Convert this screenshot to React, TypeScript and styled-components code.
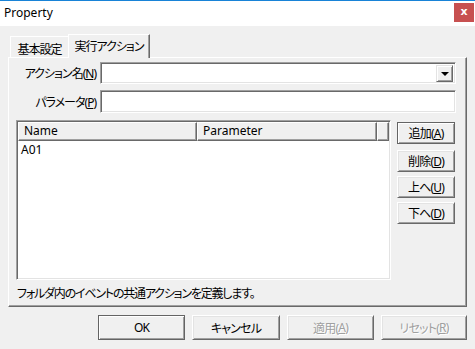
import React from "react";
import styled, { createGlobalStyle, css } from "styled-components";

const GlobalStyle = createGlobalStyle`
  html, body {
    margin: 0;
    padding: 0;
    background: #f0f0f0;
  }
  body {
    font-family: "Noto Sans", "Noto Sans CJK JP", sans-serif;
    font-size: 12px;
    font-feature-settings: "palt";
    color: #000;
  }
  * {
    box-sizing: border-box;
  }
`;

const Window = styled.div`
  width: 475px;
  height: 349px;
  background: #f0f0f0;
  display: flex;
  flex-direction: column;
  overflow: hidden;
`;

const TitleBar = styled.div`
  height: 26px;
  background: #fff;
  border-top: 1px solid #1883d7;
  display: flex;
  align-items: flex-start;
  padding-left: 4px;
`;

const TitleText = styled.div`
  font-family: "Noto Sans", sans-serif;
  font-size: 12px;
  line-height: 22px;
  margin-top: 1px;
`;

const CloseButton = styled.div`
  margin-left: auto;
  margin-top: 2px;
  margin-right: 1px;
  width: 20px;
  height: 19px;
  background: #c75050;
  color: #fff;
  display: flex;
  align-items: center;
  justify-content: center;
  font-family: "DejaVu Sans", sans-serif;
  font-size: 11px;
  font-weight: bold;
  line-height: 1;
  padding-bottom: 2px;
`;

const Body = styled.div`
  padding: 8px 8px 0 8px;
  display: flex;
  flex-direction: column;
`;

const TabStrip = styled.div`
  display: flex;
  align-items: flex-end;
  height: 23px;
  padding-left: 2px;
  position: relative;
  z-index: 1;
`;

const Tab = styled.div<{ $active?: boolean }>`
  display: flex;
  align-items: center;
  justify-content: center;
  letter-spacing: -1px;
  border-top: 1px solid #fff;
  border-left: 1px solid #fff;
  border-right: 1px solid #696969;
  box-shadow: inset -1px 0 #a0a0a0;
  background: #f0f0f0;
  ${({ $active }) =>
    $active
      ? css`
          width: 82px;
          height: 24px;
          margin-bottom: -1px;
          padding-bottom: 1px;
        `
      : css`
          width: 58px;
          height: 21px;
          border-right: none;
          box-shadow: none;
          padding-top: 3px;
        `}
`;

const Panel = styled.div`
  width: 459px;
  height: 250px;
  border-top: 1px solid #fff;
  border-left: 1px solid #fff;
  border-right: 1px solid #696969;
  border-bottom: 1px solid #696969;
  box-shadow: inset -1px -1px #a0a0a0;
  padding: 4px 10px 0 7px;
  display: flex;
  flex-direction: column;
`;

const FormRow = styled.div<{ $h: number; $mt?: number }>`
  display: flex;
  align-items: center;
  height: ${({ $h }) => $h}px;
  margin-top: ${({ $mt }) => $mt || 0}px;
`;

const Label = styled.div`
  width: 80px;
  text-align: right;
  margin-right: 4px;
  white-space: nowrap;
  letter-spacing: -1px;
`;

const Field = styled.div`
  flex: 1;
  height: 100%;
  background: #fff;
  border-top: 1px solid #a0a0a0;
  border-left: 1px solid #a0a0a0;
  border-right: 1px solid #fff;
  border-bottom: 1px solid #fff;
  box-shadow: inset 1px 1px #696969, inset -1px -1px #e3e3e3;
  display: flex;
  justify-content: flex-end;
  align-items: center;
  padding-right: 2px;
`;

const DropButton = styled.div`
  width: 17px;
  height: 17px;
  background: #f0f0f0;
  border-top: 1px solid #e3e3e3;
  border-left: 1px solid #e3e3e3;
  border-right: 1px solid #696969;
  border-bottom: 1px solid #696969;
  box-shadow: inset 1px 1px #fff, inset -1px -1px #a0a0a0;
  display: flex;
  align-items: center;
  justify-content: center;
`;

const Arrow = styled.div`
  width: 0;
  height: 0;
  border-left: 4px solid transparent;
  border-right: 4px solid transparent;
  border-top: 4px solid #000;
  margin-top: 1px;
`;

const ListArea = styled.div`
  display: flex;
  margin-top: 7px;
  gap: 6px;
`;

const ListView = styled.div`
  width: 375px;
  height: 160px;
  background: #fff;
  border-top: 1px solid #a0a0a0;
  border-left: 1px solid #a0a0a0;
  border-right: 1px solid #fff;
  border-bottom: 1px solid #fff;
  box-shadow: inset 1px 1px #696969, inset -1px -1px #e3e3e3;
  padding: 1px 1px 0 1px;
  display: flex;
  flex-direction: column;
`;

const HeaderRow = styled.div`
  display: flex;
  height: 19px;
`;

const HeaderCell = styled.div<{ $w?: number }>`
  ${({ $w }) => ($w ? `width: ${$w}px;` : "flex: 1;")}
  height: 100%;
  background: #f0f0f0;
  border-top: 1px solid #fff;
  border-left: 1px solid #fff;
  border-right: 1px solid #696969;
  border-bottom: 1px solid #696969;
  box-shadow: inset -1px -1px #a0a0a0;
  padding-left: 5px;
  line-height: 16px;
  white-space: nowrap;
  overflow: hidden;
`;

const ItemRow = styled.div`
  height: 16px;
  line-height: 16px;
  padding-left: 3px;
  margin-top: 1px;
`;

const SideButtons = styled.div`
  display: flex;
  flex-direction: column;
  padding-top: 2px;
  gap: 4px;
`;

const Button = styled.div<{
  $w: number;
  $h: number;
  $default?: boolean;
  $disabled?: boolean;
}>`
  width: ${({ $w }) => $w}px;
  height: ${({ $h }) => $h}px;
  display: flex;
  align-items: center;
  justify-content: center;
  letter-spacing: -0.8px;
  background: #f0f0f0;
  border-top: 1px solid #fff;
  border-left: 1px solid #fff;
  border-right: 1px solid #696969;
  border-bottom: 1px solid #696969;
  box-shadow: inset 1px 1px #e3e3e3, inset -1px -1px #a0a0a0;
  white-space: nowrap;
  ${({ $default }) =>
    $default &&
    css`
      border: 1px solid #646464;
      box-shadow: inset 1px 1px #fff, inset -1px -1px #a0a0a0;
    `}
  ${({ $disabled }) =>
    $disabled &&
    css`
      color: #a0a0a0;
      text-shadow: 1px 1px #fff;
    `}
`;

const StatusText = styled.div`
  margin-top: 7px;
  line-height: 14px;
  padding-left: 1px;
  white-space: nowrap;
  letter-spacing: -1.2px;
`;

const Footer = styled.div`
  display: flex;
  justify-content: flex-end;
  gap: 7px;
  margin-top: 8px;
`;

const U = styled.span`
  text-decoration: underline;
`;

export default function App() {
  return (
    <>
      <GlobalStyle />
      <Window>
        <TitleBar>
          <TitleText>Property</TitleText>
          <CloseButton>x</CloseButton>
        </TitleBar>
        <Body>
          <TabStrip>
            <Tab>基本設定</Tab>
            <Tab $active>実行アクション</Tab>
          </TabStrip>
          <Panel>
            <FormRow $h={22}>
              <Label>
                アクション名(<U>N</U>)
              </Label>
              <Field>
                <DropButton>
                  <Arrow />
                </DropButton>
              </Field>
            </FormRow>
            <FormRow $h={23} $mt={6}>
              <Label>
                パラメータ(<U>P</U>)
              </Label>
              <Field />
            </FormRow>
            <ListArea>
              <ListView>
                <HeaderRow>
                  <HeaderCell $w={179}>Name</HeaderCell>
                  <HeaderCell $w={180}>Parameter</HeaderCell>
                  <HeaderCell />
                </HeaderRow>
                <ItemRow>A01</ItemRow>
              </ListView>
              <SideButtons>
                <Button $w={58} $h={22} $default style={{ marginBottom: 2 }}>
                  追加(<U>A</U>)
                </Button>
                <Button $w={58} $h={22}>
                  削除(<U>D</U>)
                </Button>
                <Button $w={58} $h={22}>
                  上へ(<U>U</U>)
                </Button>
                <Button $w={58} $h={22}>
                  下へ(<U>D</U>)
                </Button>
              </SideButtons>
            </ListArea>
            <StatusText>フォルダ内のイベントの共通アクションを定義します。</StatusText>
          </Panel>
          <Footer>
            <Button $w={87} $h={25} $default>
              OK
            </Button>
            <Button $w={88} $h={25}>
              キャンセル
            </Button>
            <Button $w={87} $h={25} $disabled>
              適用(<U>A</U>)
            </Button>
            <Button $w={86} $h={25} $disabled>
              リセット(<U>R</U>)
            </Button>
          </Footer>
        </Body>
      </Window>
    </>
  );
}
